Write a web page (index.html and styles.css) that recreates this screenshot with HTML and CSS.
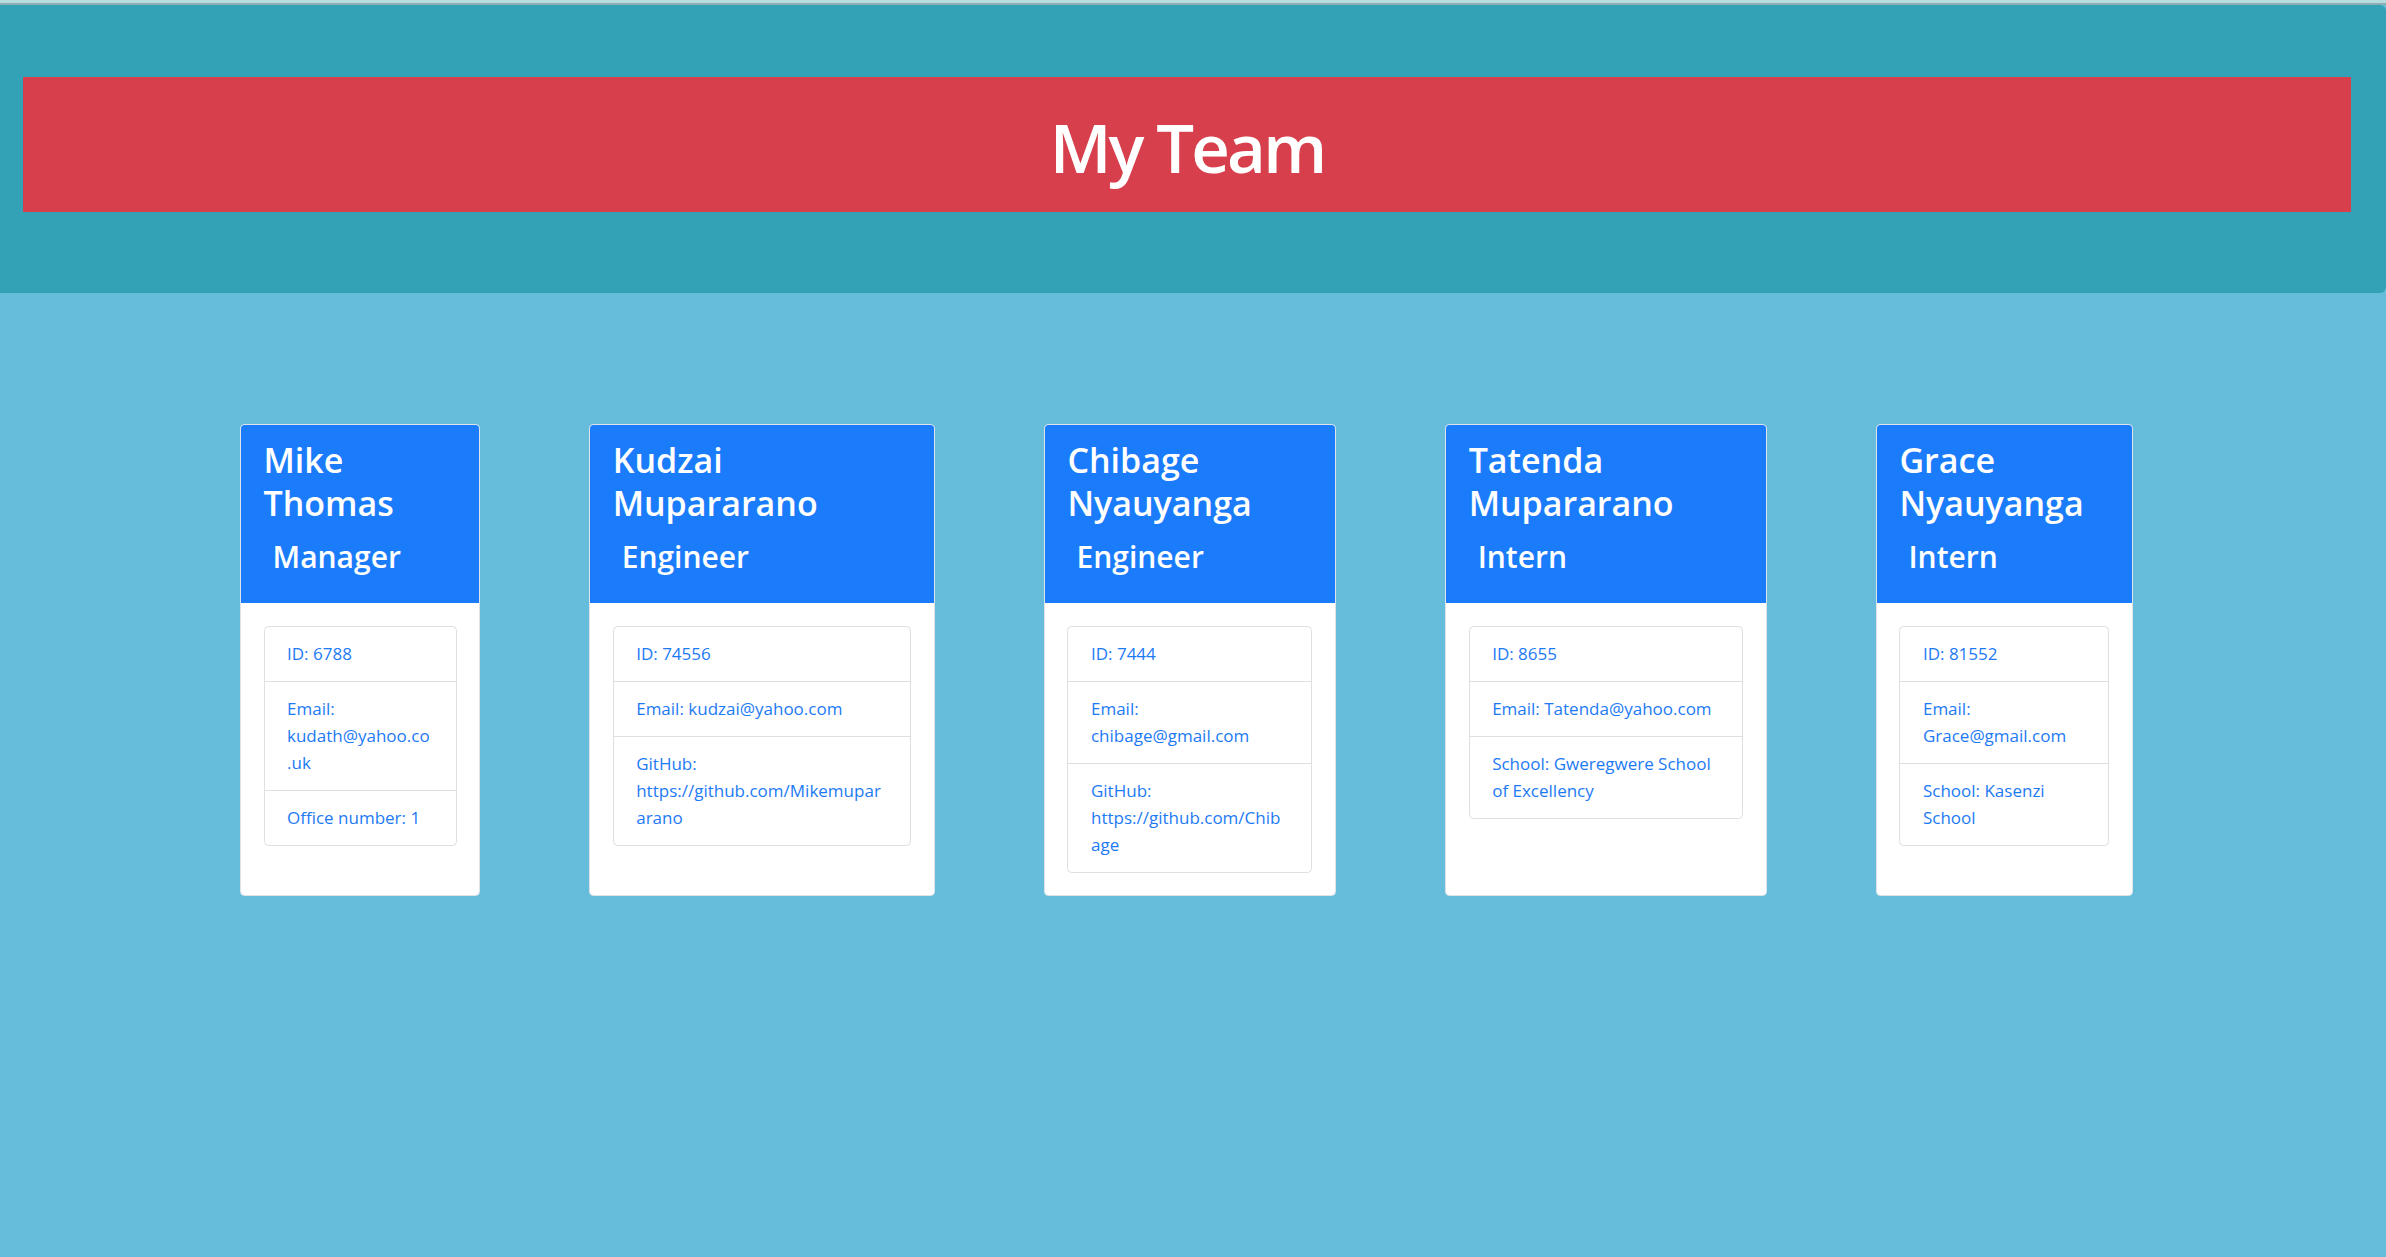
FILE: index.html
```html
<!DOCTYPE html>
<html lang="en">
<head>
<meta charset="utf-8">
<title>My Team</title>
<link rel="stylesheet" href="styles.css">
</head>
<body>
<div class="topline"></div>
<header class="jumbotron">
  <div class="banner">
    <h1 class="banner-title">My Team</h1>
  </div>
</header>
<main class="team">
  <div class="card card-mike">
    <div class="card-header">
      <h2 class="card-name">Mike Thomas</h2>
      <h3 class="card-role">Manager</h3>
    </div>
    <div class="card-body">
      <ul class="list-group">
        <li class="list-item">ID: 6788</li>
        <li class="list-item">Email: kudath@yahoo.co<br>.uk</li>
        <li class="list-item">Office number: 1</li>
      </ul>
    </div>
  </div>
  <div class="card card-kudzai">
    <div class="card-header">
      <h2 class="card-name">Kudzai Mupararano</h2>
      <h3 class="card-role">Engineer</h3>
    </div>
    <div class="card-body">
      <ul class="list-group">
        <li class="list-item">ID: 74556</li>
        <li class="list-item">Email: kudzai@yahoo.com</li>
        <li class="list-item">GitHub: https://github.com/Mikemupar<br>arano</li>
      </ul>
    </div>
  </div>
  <div class="card card-chibage">
    <div class="card-header">
      <h2 class="card-name">Chibage Nyauyanga</h2>
      <h3 class="card-role">Engineer</h3>
    </div>
    <div class="card-body">
      <ul class="list-group">
        <li class="list-item">ID: 7444</li>
        <li class="list-item">Email: chibage@gmail.com</li>
        <li class="list-item">GitHub: https://github.com/Chib<br>age</li>
      </ul>
    </div>
  </div>
  <div class="card card-tatenda">
    <div class="card-header">
      <h2 class="card-name">Tatenda Mupararano</h2>
      <h3 class="card-role">Intern</h3>
    </div>
    <div class="card-body">
      <ul class="list-group">
        <li class="list-item">ID: 8655</li>
        <li class="list-item">Email: Tatenda@yahoo.com</li>
        <li class="list-item">School: Gweregwere School of Excellency</li>
      </ul>
    </div>
  </div>
  <div class="card card-grace">
    <div class="card-header">
      <h2 class="card-name">Grace Nyauyanga</h2>
      <h3 class="card-role">Intern</h3>
    </div>
    <div class="card-body">
      <ul class="list-group">
        <li class="list-item">ID: 81552</li>
        <li class="list-item">Email: Grace@gmail.com</li>
        <li class="list-item">School: Kasenzi School</li>
      </ul>
    </div>
  </div>
</main>
</body>
</html>
```
FILE: styles.css
```css
* {
  box-sizing: border-box;
}

html, body {
  margin: 0;
  padding: 0;
}

body {
  background: #66bddb;
  font-family: "Open Sans", "Noto Sans", "Liberation Sans", sans-serif;
  min-height: 1257px;
}

.topline {
  height: 5px;
  background: #b6dce0;
  border-bottom: 2px solid #8cadb2;
}

.jumbotron {
  background: #33a1b6;
  padding: 72px 35px 81px 23px;
  border-radius: 0 6px 6px 0;
}

.banner {
  background: #d63f4b;
  height: 135px;
  padding-top: 28px;
  text-align: center;
}

.banner-title {
  margin: 0;
  color: #ffffff;
  font-size: 67px;
  font-weight: 600;
  line-height: 84px;
  letter-spacing: -2.8px;
}

.team {
  display: flex;
  align-items: stretch;
  gap: 109.2px;
  padding: 131px 0 0 240px;
}

.card {
  display: flex;
  flex-direction: column;
  background: #ffffff;
  border: 1px solid #dde3e7;
  border-radius: 4.5px;
  overflow: hidden;
  flex: none;
}

.card-mike { width: 240px; }
.card-kudzai { width: 345.6px; }
.card-chibage { width: 292px; }
.card-tatenda { width: 321.6px; }
.card-grace { width: 257px; }

.card-header {
  background: #1b7cfb;
  color: #ffffff;
  padding: 13.5px 22.5px 13.5px 22.5px;
}

.card-name {
  margin: 0 0 13.3px 0;
  font-size: 34px;
  font-weight: 600;
  line-height: 43.2px;
}

.card-role {
  margin: 0 0 13.9px 0;
  padding-left: 9px;
  font-size: 30px;
  font-weight: 600;
  line-height: 37.8px;
}

.card-body {
  flex: 1;
  padding: 22.5px;
}

.list-group {
  list-style: none;
  margin: 0;
  padding: 0;
  border: 1px solid #dfdfdf;
  border-radius: 4.5px;
}

.list-item {
  padding: 13.5px 22.5px;
  font-size: 17px;
  line-height: 27px;
  color: #1d7af5;
  border-top: 1px solid #dfdfdf;
}

.list-item:first-child {
  border-top: 0;
}
```
